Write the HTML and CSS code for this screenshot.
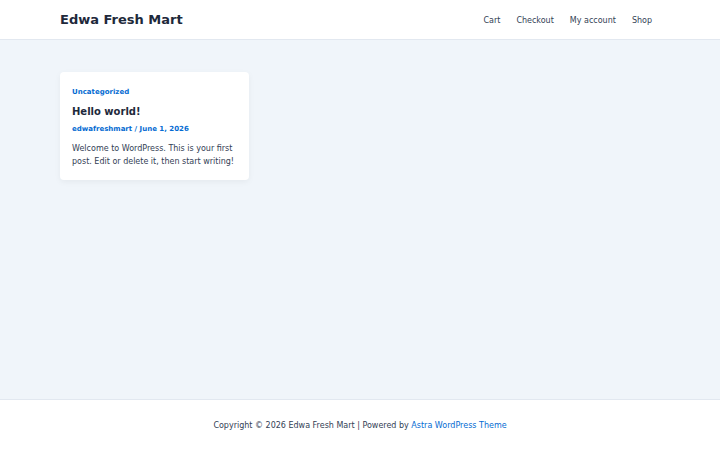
FILE: index.html
```html
<!DOCTYPE html>
<html lang="en">
<head>
  <meta charset="UTF-8" />
  <meta name="viewport" content="width=device-width, initial-scale=1.0"/>
  <title>Edwa Fresh Mart</title>
  <link rel="stylesheet" href="styles.css">
</head>
<body>

<header class="site-header">
  <div class="header-inner">
    <a class="site-title" href="#">Edwa Fresh Mart</a>
    <nav class="main-nav">
      <a href="#">Cart</a>
      <a href="#">Checkout</a>
      <a href="#">My account</a>
      <a href="#">Shop</a>
    </nav>
  </div>
</header>

<main class="site-content">
  <article class="post-card">
    <a class="post-cat" href="#">Uncategorized</a>
    <h2 class="post-title"><a href="#">Hello world!</a></h2>
    <div class="post-meta"><a href="#">edwafreshmart</a> / <span>June 1, 2026</span></div>
    <p class="post-excerpt">Welcome to WordPress. This is your first post. Edit or delete it, then start writing!</p>
  </article>
</main>

<footer class="site-footer">
  <p>Copyright © 2026 Edwa Fresh Mart | Powered by <a href="#">Astra WordPress Theme</a></p>
</footer>

</body>
</html>
```

FILE: styles.css
```css
body { margin: 0; font-family: "DejaVu Sans", sans-serif; color: #334155; background: #f0f5fa; }
a { text-decoration: none; }

.site-header { background: #fff; border-bottom: 1px solid #e2e8f0; height: 39px; }
.header-inner { display: flex; align-items: center; justify-content: space-between; height: 100%; padding: 0 60px; }
.site-title { font-size: 13px; font-weight: bold; color: #1e293b; }
.main-nav { display: flex; gap: 16px; padding: 2px 8px 0 0; }
.main-nav a { font-size: 8px; color: #334155; }

.site-content { height: 327px; padding: 32px 60px 0; }
.post-card { width: 165px; padding: 14px 12px 12px; background: #fff; border-radius: 4px; box-shadow: 0 2px 6px rgba(0,0,0,0.05); }
.post-cat { display: block; font-size: 7px; font-weight: bold; color: #046bd2; line-height: 12px; }
.post-title { margin: 7px 0 0; font-size: 10px; line-height: 14px; }
.post-title a { color: #1e293b; }
.post-meta { margin-top: 4px; font-size: 7px; font-weight: bold; color: #046bd2; line-height: 12px; }
.post-meta a { color: #046bd2; }
.post-excerpt { margin: 7px 0 0; font-size: 8px; line-height: 13px; }

.site-footer { background: #fff; border-top: 1px solid #e2e8f0; height: 50px; display: flex; align-items: center; justify-content: center; }
.site-footer p { margin: 0; font-size: 8px; color: #334155; }
.site-footer a { color: #046bd2; }
```
